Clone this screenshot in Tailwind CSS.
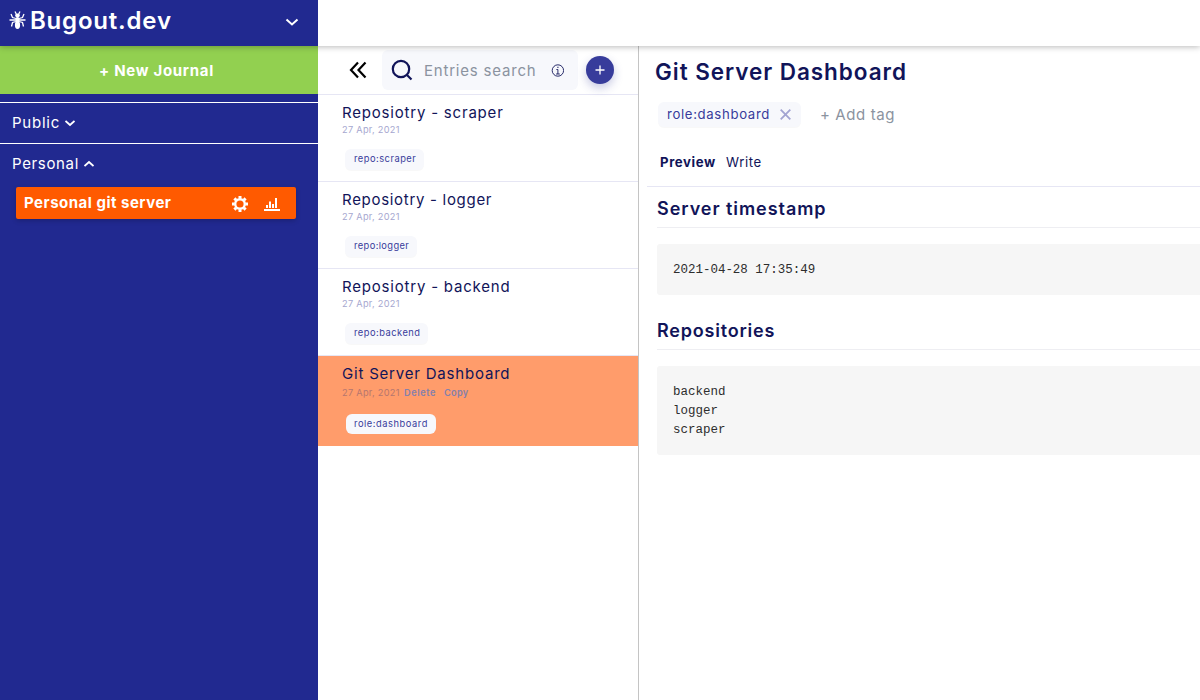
<!DOCTYPE html>
<html lang="en">
<head>
<meta charset="utf-8">
<title>Bugout.dev</title>
<script src="https://cdn.jsdelivr.net/npm/@tailwindcss/browser@4"></script>
</head>
<body class="flex h-[700px] w-[1200px] flex-col overflow-hidden bg-white font-['Inter','Noto_Sans',sans-serif] text-[15px] text-[#111459]">
  <header class="relative z-10 flex h-[46px] shrink-0 bg-white shadow-[0_1px_6px_rgba(0,0,0,0.27)]">
    <div class="flex h-full w-[318px] items-center bg-[#212990] pr-[18px] pl-[9px] text-white">
      <svg class="mt-[-6px] h-[20px] w-[17px]" viewBox="0 0 17 20" fill="none" stroke="currentColor" stroke-width="1.3">
        <ellipse cx="8.5" cy="15" rx="2.6" ry="4" fill="currentColor" stroke="none"/>
        <ellipse cx="8.5" cy="9.700" rx="2.100" ry="2.700" fill="currentColor" stroke="none"/>
        <ellipse cx="8.5" cy="5.600" rx="2.300" ry="2" fill="currentColor" stroke="none"/>
        <path d="M7.500 4.500 6 1.500M9.500 4.500 11 1.500M7 8.500 3.500 7.500 2 4M10 8.500 13.500 7.500 15 4M7 10H.5M10 10H16.500M7 11.500 3.500 12.500 2.500 16.500M10 11.500 13.500 12.500 14.500 16.500"/>
      </svg>
      <span class="mt-[-5px] ml-1 text-[24px] leading-[30px] font-semibold tracking-[0.8px]">Bugout.dev</span>
      <svg class="mt-[-2px] ml-auto h-4 w-4" viewBox="0 0 16 16" fill="none" stroke="currentColor" stroke-width="2"><path d="m2.500 5.500 5.500 5 5.500-5"/></svg>
    </div>
  </header>
  <div class="flex min-h-0 flex-1">
    <aside class="w-[318px] shrink-0 bg-[#212990] text-white">
      <div class="flex h-12 items-center justify-center bg-[#92d050] pt-[3px] pr-[5px] font-bold tracking-[0.7px]">+ New Journal</div>
      <div class="mt-2 flex h-[41px] items-center gap-[5px] border-t border-white pl-3">
        <span class="tracking-[0.75px]">Public</span>
        <svg class="h-[10px] w-[10px]" viewBox="0 0 10 10" fill="none" stroke="currentColor" stroke-width="1.800"><path d="m.5 3 4.500 4 4.500-4"/></svg>
      </div>
      <div class="flex h-[41px] items-center gap-[5px] border-t border-white pl-3">
        <span class="tracking-[0.65px]">Personal</span>
        <svg class="h-[10px] w-[10px]" viewBox="0 0 10 10" fill="none" stroke="currentColor" stroke-width="1.800"><path d="m.5 7 4.500-4 4.500 4"/></svg>
      </div>
      <div class="mt-[3px] ml-4 flex h-8 w-[280px] items-center rounded-[2px] bg-[#ff5a00] pr-4 pl-2 shadow-[0_2px_5px_rgba(0,0,0,0.18)]">
        <span class="pt-px font-bold tracking-[0.5px]">Personal git server</span>
        <svg class="mt-[2px] ml-auto h-4 w-4" viewBox="0 0 16 16" fill="none" stroke="currentColor"><circle cx="8" cy="8" r="4.800" stroke-width="2.400"/><path stroke-width="3" d="M8 0v2.600M8 13.400V16M0 8h2.600M13.400 8H16M2.400 2.400l1.800 1.800M11.800 11.800l1.800 1.800M2.400 13.600l1.800-1.800M11.800 4.200l1.800-1.800"/></svg>
        <svg class="mt-[2px] ml-4 h-4 w-4" viewBox="0 0 16 16" fill="currentColor"><path d="M0 13h16v2H0zM2 9h2v3H2zM5 5.500h2V12H5zM8 8h2v4H8zM11 2h2v10h-2z"/></svg>
      </div>
    </aside>

    <section class="w-[321px] shrink-0 border-r border-[#c4c4c4]">
      <div class="flex h-[49px] items-center border-b border-[#e6e6f4] pl-[31px]">
        <svg class="h-[18px] w-[18px] text-black" viewBox="0 0 18 18" fill="none" stroke="currentColor" stroke-width="2.200"><path d="M9 1.500 2 9l7 7.500M16.500 1.500 9.500 9l7 7.500"/></svg>
        <div class="ml-[15px] flex h-10 w-[196px] items-center rounded-md bg-[#f7f8fc] pl-[9px]">
          <svg class="h-[22px] w-[22px]" viewBox="0 0 22 22" fill="none" stroke="currentColor" stroke-width="2.200"><circle cx="10" cy="10" r="8.200"/><path d="m15.500 15.500 5 5"/></svg>
          <span class="ml-[11px] w-[127px] pt-[2px] tracking-[0.8px] text-[#8b93a0]">Entries search</span>
          <svg class="h-[13px] w-[13px]" viewBox="0 0 13 13" fill="none" stroke="currentColor" stroke-width=".9"><circle cx="6.900" cy="6.500" r="5.700"/><path d="M5.400 5.500h1.500V10M5.100 10h3.700M6.200 3.300h1.400"/></svg>
        </div>
        <div class="ml-2 flex h-7 w-7 items-center justify-center rounded-full bg-[#373c9b] text-white shadow-[0_4px_10px_rgba(55,60,155,0.28)]">
          <svg class="h-[10px] w-[10px]" viewBox="0 0 10 10" fill="none" stroke="currentColor" stroke-width="1.300"><path d="M5 .5v9M.5 5h9"/></svg>
        </div>
      </div>
      <article class="h-[87px] border-b border-[#e6e6f4] pt-2 pl-6">
        <h3 class="leading-5 tracking-[0.8px]">Reposiotry - scraper</h3>
        <p class="text-[9.2px] leading-[14px] tracking-[0.3px] text-[#a6a7cf]">27 Apr, 2021</p>
        <span class="mt-[12px] ml-[3px] inline-flex h-[21px] w-[79px] items-center rounded-md bg-[#f7f8fc] pb-px pl-[9px] text-[9.300px] tracking-[0.5px] text-[#373c9b] shadow-[0_1px_1px_rgba(0,0,0,0.03)]">repo:scraper</span>
      </article>
      <article class="h-[87px] border-b border-[#e6e6f4] pt-2 pl-6">
        <h3 class="leading-5 tracking-[0.7px]">Reposiotry - logger</h3>
        <p class="text-[9.2px] leading-[14px] tracking-[0.3px] text-[#a6a7cf]">27 Apr, 2021</p>
        <span class="mt-[12px] ml-[3px] inline-flex h-[21px] w-[72px] items-center rounded-md bg-[#f7f8fc] pb-px pl-[9px] text-[9.300px] tracking-[0.4px] text-[#373c9b] shadow-[0_1px_1px_rgba(0,0,0,0.03)]">repo:logger</span>
      </article>
      <article class="h-[87px] border-b border-[#e6e6f4] pt-2 pl-6">
        <h3 class="leading-5 tracking-[0.8px]">Reposiotry - backend</h3>
        <p class="text-[9.2px] leading-[14px] tracking-[0.3px] text-[#a6a7cf]">27 Apr, 2021</p>
        <span class="mt-[12px] ml-[3px] inline-flex h-[21px] w-[83px] items-center rounded-md bg-[#f7f8fc] pb-px pl-[9px] text-[9.300px] tracking-[0.5px] text-[#373c9b] shadow-[0_1px_1px_rgba(0,0,0,0.03)]">repo:backend</span>
      </article>
      <article class="h-[90px] bg-[#ff9c6b] pt-2 pl-6">
        <h3 class="leading-5 tracking-[0.8px]">Git Server Dashboard</h3>
        <p class="flex pt-[2px] text-[9.2px] leading-[14px] tracking-[0.3px] text-[#b5766f]"><span class="w-[62px]">27 Apr, 2021</span><span class="w-[40px] font-semibold tracking-[0.6px] text-[#8580ac]">Delete</span><span class="font-semibold text-[#8580ac]">Copy</span></p>
        <span class="mt-[14px] ml-1 inline-flex h-5 w-[90px] items-center justify-center rounded-md bg-[#f7f8fc] text-[9.300px] tracking-[0.55px] text-[#373c9b]">role:dashboard</span>
      </article>
    </section>

    <main class="min-w-0 flex-1 pl-2">
      <h1 class="pt-[11px] pl-2 text-[22.5px] leading-[30px] font-semibold tracking-[0.95px]">Git Server Dashboard</h1>
      <div class="mt-[15px] ml-[11px] flex h-[25px] items-center">
        <div class="flex h-full w-[143px] items-center rounded-md bg-[#f7f8fc] pl-[9px] text-[13.200px] tracking-[0.65px] text-[#373c9b] shadow-[0_1px_1px_rgba(0,0,0,0.03)]">
          <span class="w-[113px]">role:dashboard</span>
          <svg class="h-[11px] w-[11px] text-[#a2a4d2]" viewBox="0 0 11 11" fill="none" stroke="currentColor" stroke-width="1.800"><path d="m.7.7 9.600 9.600M10.300.7.7 10.300"/></svg>
        </div>
        <span class="ml-[19px] pt-[2px] tracking-[0.6px] text-[#8b93a0]">+ Add tag</span>
      </div>
      <div class="mt-[12px] flex h-[48px] items-center border-b border-[#e6e6f4] pl-[13px] text-[13.200px]">
        <span class="w-[66px] font-bold tracking-[0.6px]">Preview</span><span class="tracking-[0.6px]">Write</span>
      </div>
      <div class="pl-[10px]">
        <h2 class="h-[41px] border-b border-[#eeeef2] pt-2 text-[18px] leading-[28px] font-semibold tracking-[0.95px]">Server timestamp</h2>
        <pre class="mt-4 h-[51px] rounded-l-[3px] bg-[#f6f6f6] pt-[17px] pl-4 font-['Liberation_Mono',monospace] text-[12.470px] leading-[19px] text-[#2d2d2d]">2021-04-28 17:35:49</pre>
        <h2 class="mt-[14px] h-[41px] border-b border-[#eeeef2] pt-2 text-[18px] leading-[28px] font-semibold tracking-[0.8px]">Repositories</h2>
        <pre class="mt-4 h-[89px] rounded-l-[3px] bg-[#f6f6f6] pt-[17px] pl-4 font-['Liberation_Mono',monospace] text-[12.470px] leading-[19px] text-[#2d2d2d]">backend
logger
scraper</pre>
      </div>
    </main>
  </div>
</body>
</html>
